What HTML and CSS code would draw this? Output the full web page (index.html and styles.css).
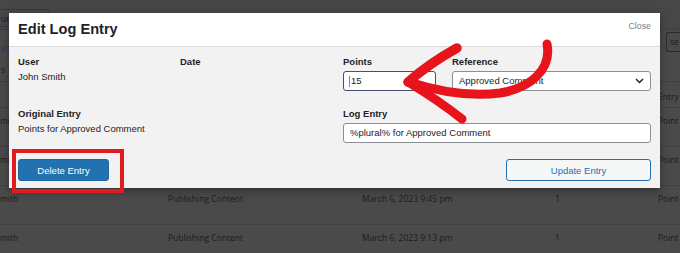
FILE: index.html
```html
<!DOCTYPE html>
<html>
<head>
<meta charset="utf-8">
<link rel="stylesheet" href="styles.css">
</head>
<body>
<div class="page">
  <div class="topbar">
    <div class="tb-btn">un</div>
    <div class="tb-right"><span class="tb-btn2">se</span></div>
  </div>
  <div class="subbar"><span>est</span></div>
  <div class="filterbar"><span>s ˅</span></div>
  <div class="thead"><span></span><span></span><span></span><span></span><span>Entry</span></div>
  <div class="trow"><span>mi</span><span></span><span></span><span></span><span>Point</span></div>
  <div class="trow"><span>mi</span><span></span><span></span><span></span><span>Point</span></div>
  <div class="trow"><span>mith</span><span>Publishing Content</span><span>March 6, 2023 9:45 pm</span><span>1</span><span>Point</span></div>
  <div class="trow"><span>mith</span><span>Publishing Content</span><span>March 6, 2023 9:13 pm</span><span>1</span><span>Point</span></div>
</div>

<div class="modal">
  <div class="modal-head">
    <h1 class="title">Edit Log Entry</h1>
    <span class="close">Close</span>
  </div>
  <div class="modal-body">
    <div class="row row1">
      <div class="field">
        <div class="label">User</div>
        <div class="value">John Smith</div>
      </div>
      <div class="field">
        <div class="label">Date</div>
      </div>
      <div class="field">
        <div class="label">Points</div>
        <div class="input focused"><span class="caret"></span>15</div>
      </div>
      <div class="field">
        <div class="label">Reference</div>
        <div class="input select">Approved Comment
          <svg class="chev" width="9" height="6" viewBox="0 0 9 6"><path d="M1 1 L4.5 4.5 L8 1" fill="none" stroke="#1d2327" stroke-width="1.5"/></svg>
        </div>
      </div>
    </div>
    <div class="row row2">
      <div class="field span2">
        <div class="label">Original Entry</div>
        <div class="value">Points for Approved Comment</div>
      </div>
      <div class="field span2">
        <div class="label">Log Entry</div>
        <div class="input">%plural% for Approved Comment</div>
      </div>
    </div>
    <div class="footer">
      <button class="btn primary">Delete Entry</button>
      <button class="btn secondary">Update Entry</button>
    </div>
  </div>
</div>

<div class="highlight"></div>

<svg class="arrow" width="680" height="253" viewBox="0 0 680 253">
  <g fill="none" stroke="#e8141b" stroke-linecap="round" stroke-linejoin="round">
    <path d="M409 82 C 440 92, 470 97, 500 93 C 530 88, 552 70, 547 44" stroke-width="9"/>
    <path d="M457 48 Q 430 63 408 82" stroke-width="9.5"/>
    <path d="M408 82 Q 438 100 462 119" stroke-width="9"/>
  </g>
</svg>
</body>
</html>
```

FILE: styles.css
```css
* { box-sizing: border-box; }
html, body { margin: 0; padding: 0; }
body {
  width: 680px;
  height: 253px;
  overflow: hidden;
  background: #4a4a4a;
  position: relative;
  font-family: "Liberation Sans", Arial, sans-serif;
}

/* dimmed background page */
.page {
  font-family: "Open Sans", "Noto Sans", sans-serif;
  font-size: 8.5px;
  color: #1c1c1c;
}
.topbar {
  height: 30px;
  background: #474747;
  border-bottom: 1px solid #3f3f3f;
  display: flex;
  justify-content: space-between;
  align-items: flex-start;
  padding-top: 9px;
}
.tb-btn {
  padding: 2px 4px 2px 1px;
  border: 1px solid #2c3a55;
  border-left: none;
  border-radius: 0 2px 2px 0;
  height: 18px;
  line-height: 13px;
  width: 50px;
}
.tb-right { padding-top: 23px; }
.tb-btn2 {
  display: inline-block;
  width: 14px;
  height: 20px;
  border: 1px solid #2d2d2d;
  border-right: none;
  border-radius: 3px 0 0 3px;
  padding: 3px 0 3px 3px;
  line-height: 12px;
}
.subbar {
  height: 24px;
  padding-top: 12px;
  padding-left: 1px;
  color: #2c3a55;
}
.filterbar {
  height: 28px;
  padding-top: 10px;
  padding-left: 1px;
  border-bottom: 1px solid #3f3f3f;
}
.thead, .trow {
  display: grid;
  grid-template-columns: 168px 194px 193px 103px 22px;
  border-bottom: 1px solid #404040;
}
.thead { height: 26px; padding-top: 9px; }
.trow { height: 39px; padding-top: 7px; }

/* modal */
.modal {
  position: absolute;
  left: 9px;
  top: 13px;
  width: 651px;
  height: 175px;
  background: #f2f2f2;
  box-shadow: 0 3px 8px rgba(0,0,0,0.35);
}
.modal-head {
  height: 34px;
  background: #ffffff;
  border-bottom: 1px solid #dcdcdc;
  display: flex;
  justify-content: space-between;
  align-items: flex-start;
  padding: 0 9px;
}
.title {
  margin: 0;
  font-size: 14.6px;
  font-weight: bold;
  color: #1d2327;
  line-height: 32px;
}
.close {
  font-size: 8.8px;
  color: #7d7d7d;
  margin-top: 8px;
}
.modal-body {
  padding: 9px 9px 7px 9px;
  font-size: 9.5px;
  color: #1d2327;
}
.row {
  display: grid;
  grid-template-columns: 162px 163px 109px 1fr;
}
.row2 { margin-top: 17px; }
.span2 { grid-column: span 2; }
.label {
  font-weight: bold;
  line-height: 12px;
  margin-bottom: 3px;
}
.value { line-height: 12px; }
.input {
  height: 20px;
  background: #ffffff;
  border: 1px solid #8c8f94;
  border-radius: 3px;
  padding: 0 6px;
  line-height: 18px;
  display: flex;
  align-items: center;
}
.row1 .field:nth-child(3) .input { width: 93px; }
.focused {
  border: 1.5px solid #4a4d73;
  padding-left: 5px;
}
.caret {
  display: inline-block;
  width: 1px;
  height: 11px;
  background: #888;
  margin-right: 1px;
}
.select { justify-content: space-between; }
.footer {
  margin-top: 16px;
  display: flex;
  justify-content: space-between;
}
.btn {
  height: 22px;
  border-radius: 3px;
  font-family: "Liberation Sans", Arial, sans-serif;
  font-size: 9.5px;
  padding: 0;
}
.primary {
  width: 91px;
  background: #2271b1;
  border: 1px solid #1e67a3;
  color: #ffffff;
}
.secondary {
  width: 145px;
  background: #f6f7f7;
  border: 1px solid #2271b1;
  color: #2271b1;
}

/* annotations */
.highlight {
  position: absolute;
  left: 12px;
  top: 149px;
  width: 112px;
  height: 44px;
  border: 4px solid #e01b22;
}
.arrow {
  position: absolute;
  left: 0;
  top: 0;
}
```
